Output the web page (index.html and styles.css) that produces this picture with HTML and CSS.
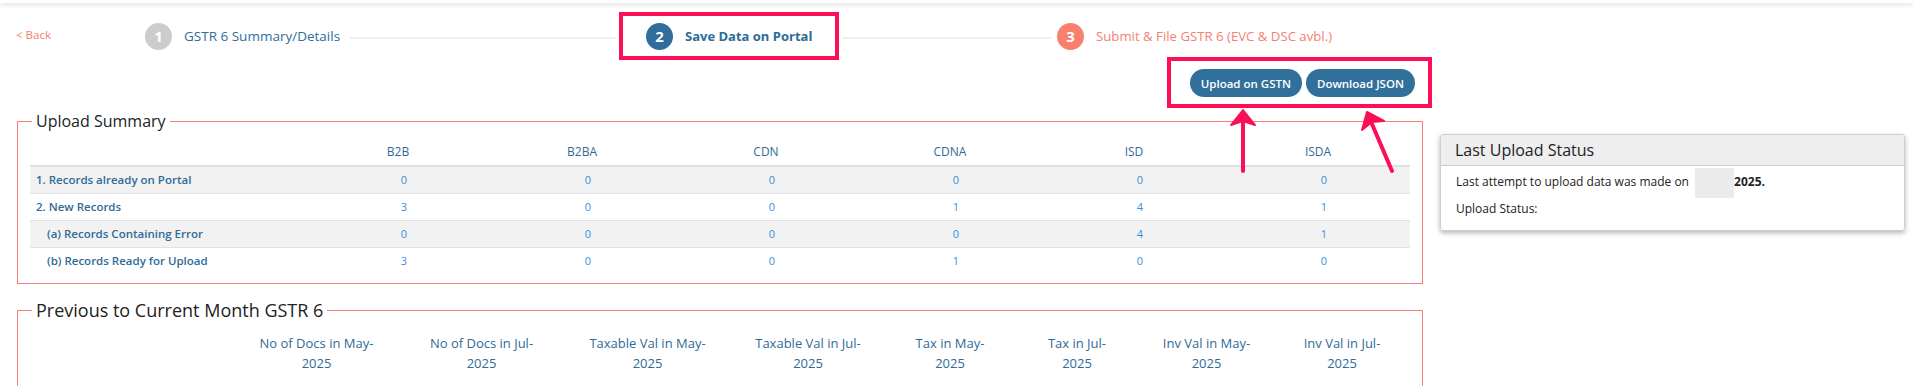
FILE: index.html
```html
<!DOCTYPE html>
<html lang="en">
<head>
<meta charset="utf-8">
<title>GSTR 6 - Save Data on Portal</title>
<link rel="stylesheet" href="styles.css">
</head>
<body>
<div class="topbar"></div>

<div class="stepper">
  <a class="back">&lt; Back</a>
  <div class="step step-done"><span class="num">1</span><span class="label">GSTR 6 Summary/Details</span></div>
  <div class="line line-one"></div>
  <div class="step step-active mark"><span class="num">2</span><span class="label">Save Data on Portal</span></div>
  <div class="line line-two"></div>
  <div class="step step-next"><span class="num">3</span><span class="label">Submit &amp; File GSTR 6 (EVC &amp; DSC avbl.)</span></div>
</div>

<div class="actions">
  <div class="btnbox mark">
    <button class="btn">Upload on GSTN</button>
    <button class="btn">Download JSON</button>
  </div>
</div>

<div class="main">
  <div class="leftcol">
    <fieldset class="group">
      <legend>Upload Summary</legend>
      <table class="summary">
        <colgroup>
          <col class="c-label"><col class="c-num"><col class="c-num"><col class="c-num"><col class="c-num"><col class="c-num"><col class="c-num">
        </colgroup>
        <thead>
          <tr><th></th><th>B2B</th><th>B2BA</th><th>CDN</th><th>CDNA</th><th>ISD</th><th>ISDA</th></tr>
        </thead>
        <tbody>
          <tr class="odd"><td class="lbl">1. Records already on Portal</td><td class="n">0</td><td class="n">0</td><td class="n">0</td><td class="n">0</td><td class="n">0</td><td class="n">0</td></tr>
          <tr><td class="lbl">2. New Records</td><td class="n">3</td><td class="n">0</td><td class="n">0</td><td class="n">1</td><td class="n">4</td><td class="n">1</td></tr>
          <tr class="odd"><td class="lbl sub">(a) Records Containing Error</td><td class="n">0</td><td class="n">0</td><td class="n">0</td><td class="n">0</td><td class="n">4</td><td class="n">1</td></tr>
          <tr><td class="lbl sub">(b) Records Ready for Upload</td><td class="n">3</td><td class="n">0</td><td class="n">0</td><td class="n">1</td><td class="n">0</td><td class="n">0</td></tr>
        </tbody>
      </table>
    </fieldset>

    <fieldset class="group group-second">
      <legend>Previous to Current Month GSTR 6</legend>
      <table class="compare">
        <colgroup>
          <col class="w204"><col class="w165"><col class="w165"><col class="w167"><col class="w154"><col class="w130"><col class="w124"><col class="w135"><col class="w136">
        </colgroup>
        <thead>
          <tr>
            <th></th>
            <th>No of Docs in May-<br>2025</th>
            <th>No of Docs in Jul-<br>2025</th>
            <th>Taxable Val in May-<br>2025</th>
            <th>Taxable Val in Jul-<br>2025</th>
            <th>Tax in May-<br>2025</th>
            <th>Tax in Jul-<br>2025</th>
            <th>Inv Val in May-<br>2025</th>
            <th>Inv Val in Jul-<br>2025</th>
          </tr>
        </thead>
      </table>
    </fieldset>
  </div>

  <div class="rightcol">
    <div class="status">
      <div class="status-head">Last Upload Status</div>
      <div class="status-body">
        <p>Last attempt to upload data was made on <span class="redact"></span><b>2025.</b></p>
        <p>Upload Status:</p>
      </div>
    </div>
  </div>
</div>

<svg class="arrows" width="1913" height="386" viewBox="0 0 1913 386" xmlns="http://www.w3.org/2000/svg">
  <g fill="#fc0f57" stroke="#fc0f57" stroke-linecap="round" stroke-linejoin="round">
    <line x1="1243" y1="171" x2="1243" y2="120" stroke-width="4"/>
    <path d="M1243 110 L1255 125 L1243 121 L1231 125 Z" stroke-width="2"/>
    <line x1="1392" y1="171" x2="1372" y2="124" stroke-width="4"/>
    <path d="M1367 112 L1384 121 L1372 122 L1362 130 Z" stroke-width="2"/>
  </g>
</svg>
</body>
</html>
```

FILE: styles.css
```css
* { box-sizing: border-box; }

html, body {
  margin: 0;
  padding: 0;
  background: #fff;
}

body {
  position: relative;
  width: 1913px;
  height: 386px;
  overflow: hidden;
  font-family: "Open Sans", "Noto Sans", sans-serif;
  color: #222;
}

.topbar {
  height: 3px;
  background: #fff;
  box-shadow: 0 2px 4px rgba(0, 0, 0, 0.14);
}

/* ---------- stepper ---------- */
.stepper {
  display: flex;
  align-items: center;
  height: 48px;
  margin-top: 9px;
  padding-left: 16px;
}

.back {
  flex: none;
  width: 129px;
  font-size: 11.5px;
  color: #f47d6f;
  margin-top: -4px;
}

.step {
  flex: none;
  display: flex;
  align-items: center;
  gap: 12px;
  font-size: 13.5px;
}

.num {
  flex: none;
  width: 27px;
  height: 27px;
  border-radius: 50%;
  display: flex;
  align-items: center;
  justify-content: center;
  color: #fff;
  font-weight: 700;
  font-size: 15px;
}

.step-done { width: 205px; }
.step-done .num { background: #cccccc; }
.step-done .label { color: #2f6d9a; }

.step-active {
  width: 220px;
  height: 48px;
  padding-left: 23px;
  margin-left: 2px;
}
.step-active .num { background: #2f6e9b; }
.step-active .label { color: #2f6b97; font-weight: 700; font-size: 13px; }

.step-next { margin-left: 5px; }
.step-next .num { background: #f7806f; }
.step-next .label { color: #f47f70; font-size: 13.2px; }

.mark { border: 4px solid #fc0f57; }

.line {
  flex: none;
  height: 2px;
  background: #f0f0f0;
  margin-top: 3px;
}
.line-one { width: 267px; }
.line-two { width: 210px; margin-left: 3px; }

/* ---------- actions ---------- */
.actions {
  display: flex;
  justify-content: flex-end;
  padding-right: 481px;
  margin-top: -3px;
}

.btnbox {
  display: flex;
  gap: 4px;
  height: 51px;
  padding: 8px 13px 0 19px;
}

.btn {
  height: 28px;
  border: 0;
  border-radius: 14px;
  background: #32709c;
  color: #fff;
  font-family: "Open Sans", "Noto Sans", sans-serif;
  font-size: 11.5px;
  font-weight: 600;
  padding: 0 11px;
}

/* ---------- main ---------- */
.main {
  display: flex;
  gap: 17px;
  padding-left: 17px;
  margin-top: 2px;
}

.leftcol {
  flex: none;
  width: 1406px;
}

.rightcol {
  flex: none;
  width: 465px;
}

.group {
  margin: 0;
  padding: 0 12px 9px;
  border: 1px solid #f57f70;
  min-width: 0;
}

.group legend {
  margin-left: 2px;
  padding: 0 4px;
  font-size: 16px;
  line-height: 22px;
  color: #222;
}

.group-second {
  margin-top: 14px;
  padding-bottom: 60px;
}

.group-second legend {
  font-size: 18px;
  line-height: 25px;
}

/* upload summary table */
.summary {
  width: 100%;
  table-layout: fixed;
  border-collapse: collapse;
  margin-top: 6px;
}

.c-label { width: 276px; }
.c-num { width: 184px; }

.summary th {
  height: 28px;
  padding: 0;
  font-size: 12px;
  font-weight: 400;
  color: #2f6b97;
  text-align: center;
  border-bottom: 2px solid #dee2e6;
}

.summary td {
  height: 27px;
  padding: 0;
  border-top: 1px solid #dee2e6;
}

.summary tr.odd td { background: #f2f2f2; }

.summary .lbl {
  padding-left: 6px;
  font-size: 11.5px;
  font-weight: 600;
  color: #2f6b97;
}

.summary .sub { padding-left: 17px; }

.summary .n {
  text-align: center;
  padding-left: 12px;
  font-size: 11px;
  color: #3d8fd6;
}

/* comparison table */
.compare {
  width: 100%;
  table-layout: fixed;
  border-collapse: collapse;
  margin-top: 10px;
}

.w204 { width: 204px; }
.w165 { width: 165px; }
.w167 { width: 167px; }
.w154 { width: 154px; }
.w130 { width: 130px; }
.w124 { width: 124px; }
.w135 { width: 135px; }
.w136 { width: 136px; }

.compare th {
  padding: 0;
  font-size: 13px;
  line-height: 20px;
  font-weight: 400;
  color: #2f6b97;
  text-align: center;
}

/* status panel */
.status {
  margin-top: 24px;
  border: 1px solid #cfcfcf;
  border-radius: 3px;
  box-shadow: 0 2px 5px rgba(0, 0, 0, 0.3);
  overflow: hidden;
}

.status-head {
  height: 31px;
  line-height: 30px;
  padding-left: 14px;
  background: #eeeeee;
  border-bottom: 1px solid #cccccc;
  font-size: 16px;
  color: #222;
}

.status-body {
  padding: 7px 15px 12px;
  font-size: 12px;
  line-height: 18px;
  color: #222;
}

.status-body p { margin: 0 0 8px; }
.status-body p:last-child { margin-bottom: 0; }

.redact {
  display: inline-block;
  width: 39px;
  height: 30px;
  margin: -6px 0 -6px 3px;
  vertical-align: middle;
  background: #ebebeb;
  filter: blur(0.6px);
}

/* annotation arrows */
.arrows {
  position: absolute;
  top: 0;
  left: 0;
  pointer-events: none;
}
```
